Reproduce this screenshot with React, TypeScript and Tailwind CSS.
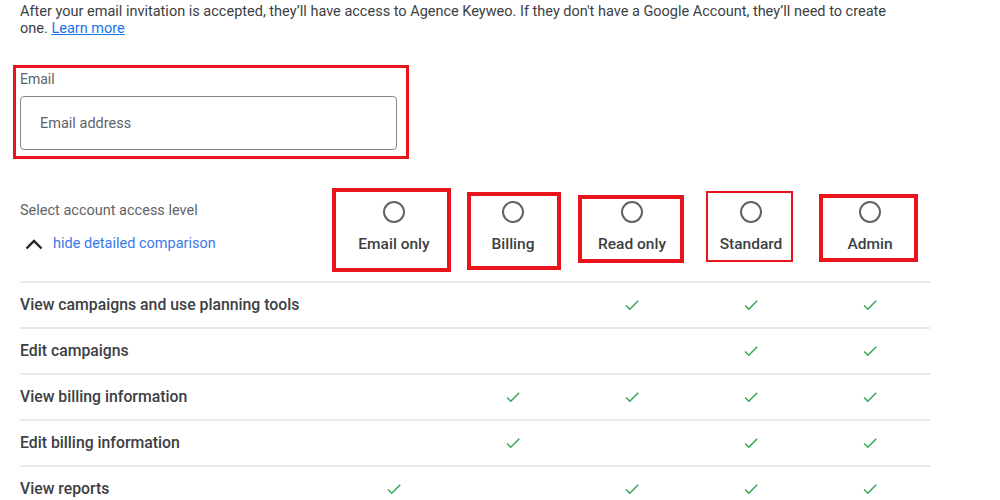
import React from "react";

const cols = [
  { label: "Email only", frame: "left-[-2.5px] top-[8px] w-[119px] h-[84px] border-4" },
  { label: "Billing", frame: "left-[13.5px] top-[12px] w-[94px] h-[78px] border-4" },
  { label: "Read only", frame: "left-[5.5px] top-[15px] w-[106px] h-[68px] border-4" },
  { label: "Standard", frame: "left-[14.5px] top-[11px] w-[87px] h-[71px] border-2" },
  { label: "Admin", frame: "left-[8.5px] top-[14px] w-[99px] h-[68px] border-4" },
];

const rows: { label: string; v: boolean[] }[] = [
  { label: "View campaigns and use planning tools", v: [false, false, true, true, true] },
  { label: "Edit campaigns", v: [false, false, false, true, true] },
  { label: "View billing information", v: [false, true, true, true, true] },
  { label: "Edit billing information", v: [false, true, false, true, true] },
  { label: "View reports", v: [true, false, true, true, true] },
];

function Check() {
  return (
    <svg width="18" height="18" viewBox="0 0 24 24" fill="#34a853">
      <path d="M9 16.17L4.83 12l-1.42 1.41L9 19 21 7l-1.41-1.41z" />
    </svg>
  );
}

export default function App() {
  return (
    <div
      className="w-[1000px] h-[500px] overflow-hidden bg-white text-[#3c4043]"
      style={{ fontFamily: "Roboto, 'Liberation Sans', sans-serif" }}
    >
      <div className="pl-[20px] pt-[3px] h-[36px] w-[908px] text-[14.5px] leading-[17px]">
        <div>After your email invitation is accepted, they’ll have access to Agence Keyweo. If they don't have a Google Account, they’ll need to create</div>
        <div>
          one. <span className="text-[#1a73e8] underline">Learn more</span>
        </div>
      </div>

      <div className="ml-[13px] mt-[29px] w-[396px] h-[94px] border-[3px] border-[#e8131b] pl-[4px]">
        <div className="text-[14px] leading-[20px] pt-[1px] text-[#5f6368]">Email</div>
        <div className="mt-[7px] h-[54px] w-[377px] border border-[#80868b] rounded-[4px] pl-[19px] pt-[2px] flex items-center text-[14.5px] text-[#5f6368]">
          Email address
        </div>
      </div>

      <div className="ml-[20px] mt-[21px] w-[909.5px]">
        <div className="grid grid-cols-[314.5px_repeat(5,119px)] h-[101px]">
          <div className="flex flex-col">
            <div className="mt-[21px] text-[14.5px] leading-[20px] text-[#5f6368]">Select account access level</div>
            <div className="mt-[13px] flex items-center h-[20px]">
              <svg width="18" height="11" viewBox="0 0 18 11" className="ml-[5px]">
                <polyline points="1.5,9.5 9,2 16.5,9.5" fill="none" stroke="#202124" strokeWidth="2.4" />
              </svg>
              <span className="ml-[10px] text-[14.5px] leading-[20px] text-[#3b78e7]">hide detailed comparison</span>
            </div>
          </div>
          {cols.map((c) => (
            <div key={c.label} className="relative flex flex-col items-center">
              <div className="mt-[21px] w-[22px] h-[22px] rounded-full border-2 border-[#5f6368]" />
              <div className="mt-[11px] text-[15.5px] leading-[20px] font-medium text-[#3c4043]">{c.label}</div>
              <div className={`absolute border-[#e8131b] ${c.frame}`} />
            </div>
          ))}
        </div>

        {rows.map((r) => (
          <div
            key={r.label}
            className="grid grid-cols-[314.5px_repeat(5,119px)] h-[46px] border-t-2 border-[#e8eaed] items-center"
          >
            <div className="text-[15.8px] font-medium leading-[20px] text-[#3c4043]">{r.label}</div>
            {r.v.map((ok, i) => (
              <div key={i} className="flex justify-center">
                {ok ? <Check /> : null}
              </div>
            ))}
          </div>
        ))}
      </div>
    </div>
  );
}
